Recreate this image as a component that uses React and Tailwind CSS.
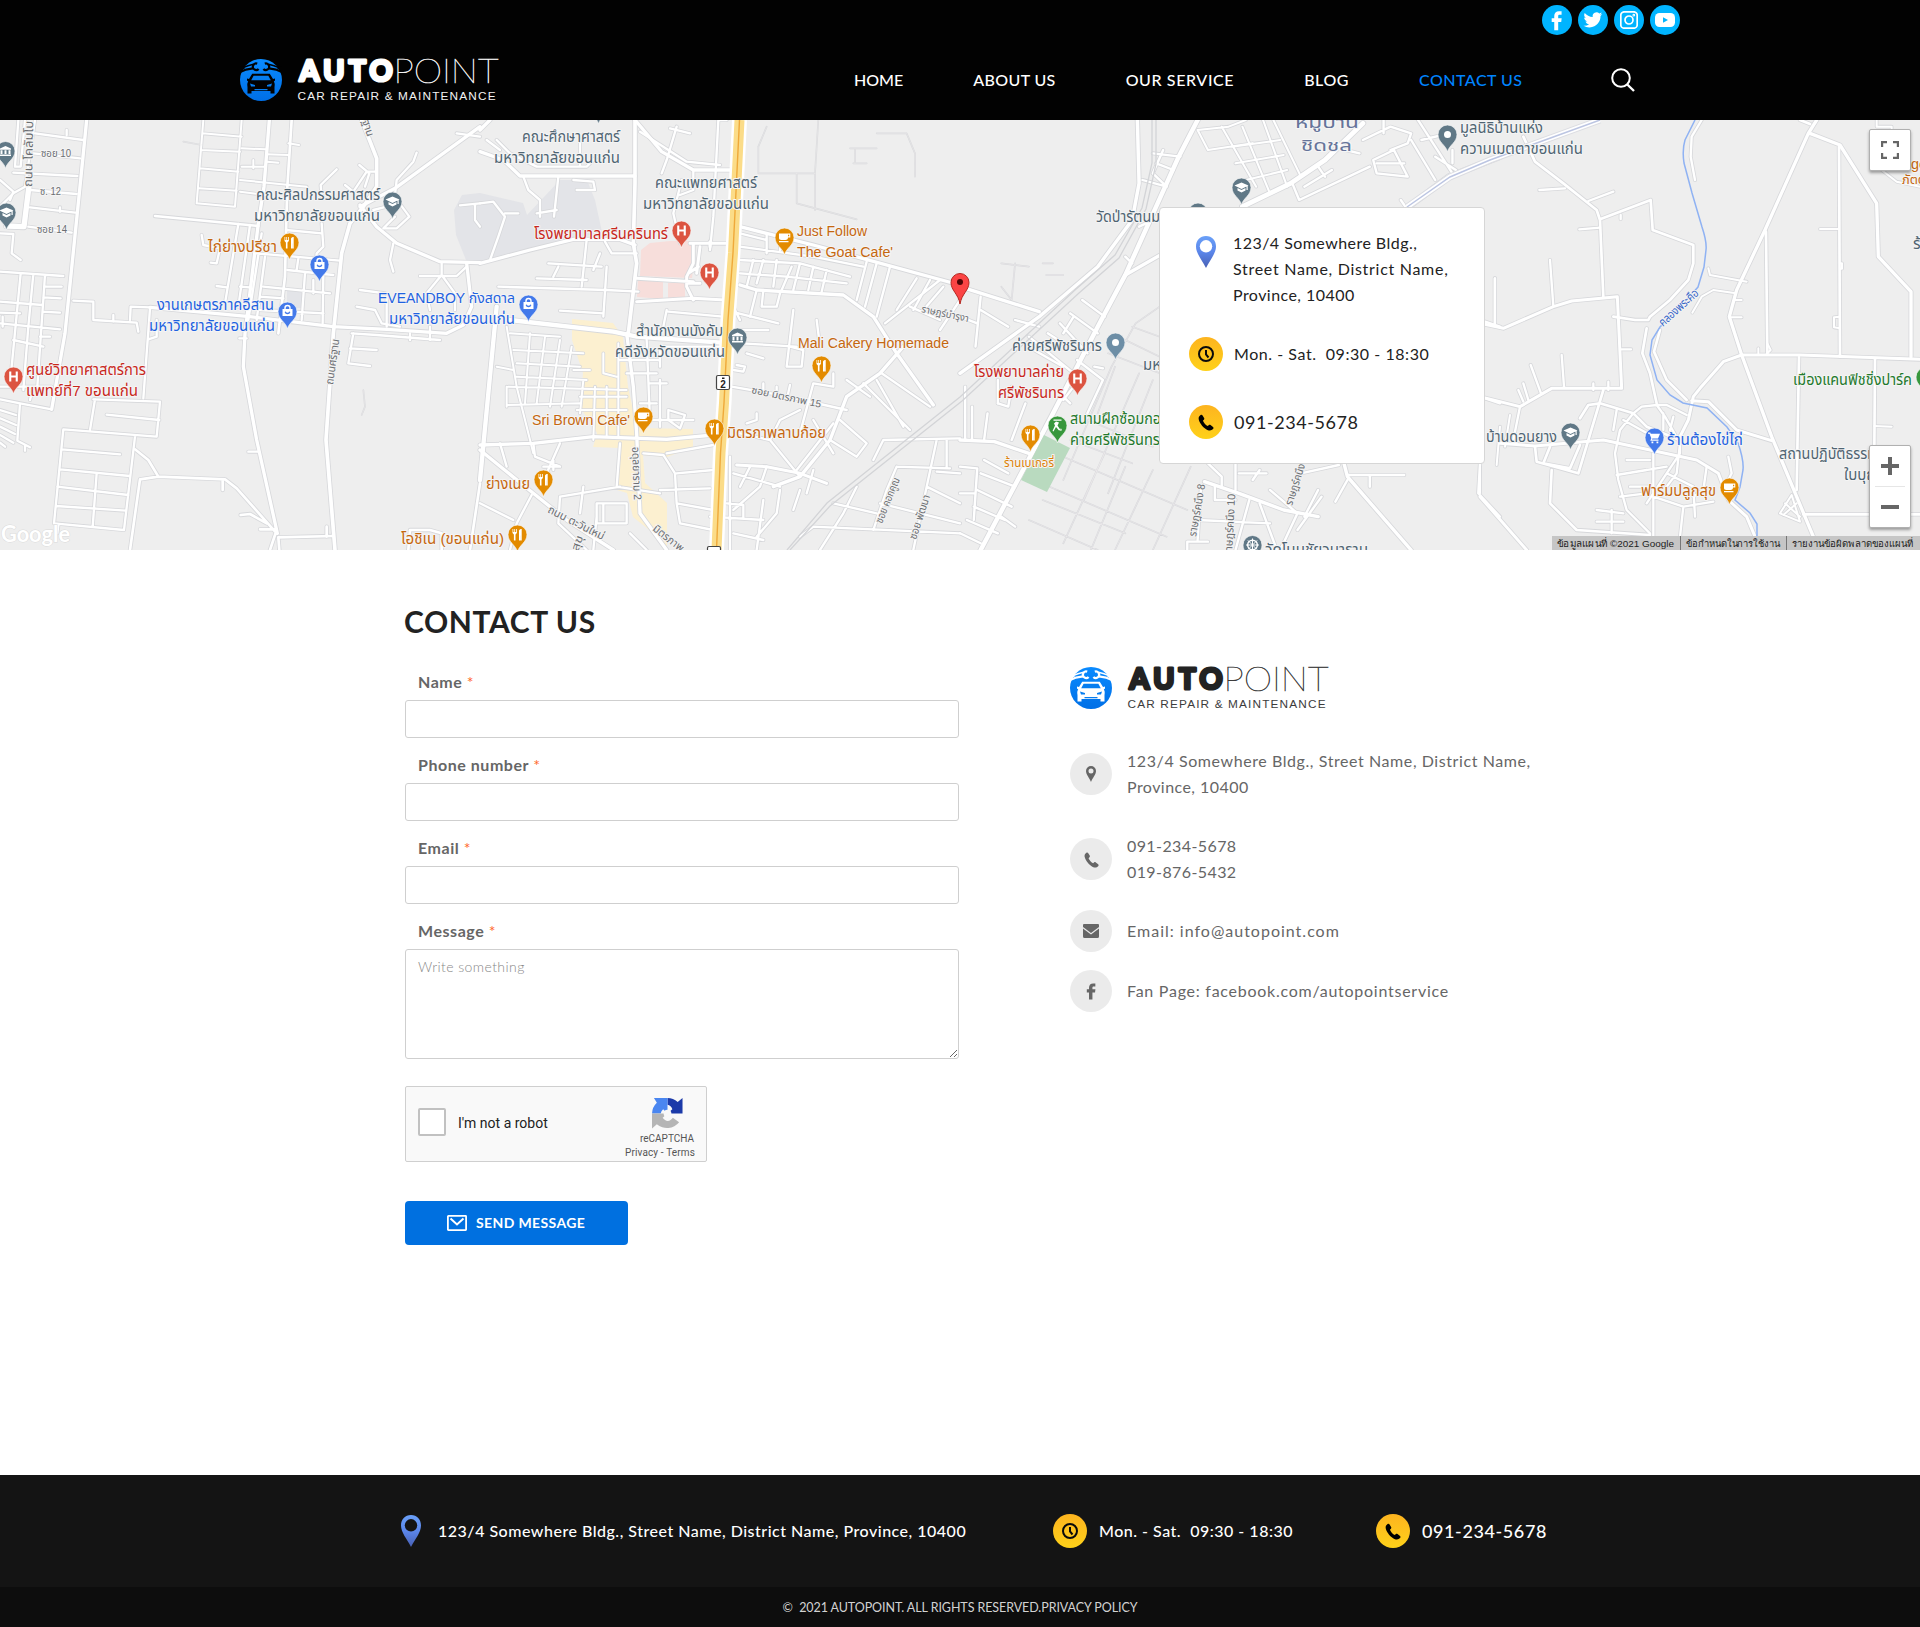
import React from "react";

/* ---------- Brand ---------- */

function CarBadge({ bg }) {
  const id = "badge" + bg.slice(1);
  return (
    <svg viewBox="0 0 42 42" className="block h-[42px] w-[42px] shrink-0">
      <defs>
        <linearGradient id={id} x1="0" y1="0" x2="0" y2="1">
          <stop offset="0" stopColor="#0a8bff" />
          <stop offset="1" stopColor="#006fe6" />
        </linearGradient>
      </defs>
      <circle cx="21" cy="21" r="21" fill={"url(#" + id + ")"} />
      <g fill="none" stroke={bg}>
        <path d="M-1 13.500C4 10.500 8 9.800 13 9.300M43 13.500C38 10.500 34 9.800 29 9.300" strokeWidth="2.200" />
        <path d="M0 9.800L8 6.800L13.500 5.200M42 9.800L34 6.800L28.500 5.200" strokeWidth="1.500" />
        <path d="M17.200 4.600A3.300 3.300 0 1 0 18.600 10M24.800 4.600A3.300 3.300 0 1 1 23.400 10" strokeWidth="2.200" />
      </g>
      <path d="M0 8L3 7.500L5 9.500L0 12ZM42 8L39 7.500L37 9.500L42 12Z" fill={bg} />
      <path d="M12.200 14.800H29.800L33 20L35 19.500V21.500L33.800 22.500C35 24 34.800 26 34.500 28V34.500H30.500V32H11.500V34.500H7.500V28C7.200 26 7 24 8.200 22.500L7 21.500V19.500L9 20Z" fill={bg} />
      <path d="M13.600 16.800H28.400L30.800 21.300H11.200Z" fill="#067df0" />
      <path d="M10 24.500L15 26V27.500H11ZM32 24.500L27 26V27.500H31ZM14.500 30H27.500V31.200H14.500Z" fill="#067df0" />
    </svg>
  );
}

function Logo({ bg, strong, light }) {
  return (
    <a className="flex w-[258px] gap-4">
      <CarBadge bg={bg} />
      <svg viewBox="0 0 202 44" className="block h-[44px] w-[202px] shrink-0 overflow-visible">
        <text x="1.500" y="22.400" fontFamily="Lato" fontWeight="700" fontSize="28.500" textLength="93" fill={strong} stroke={strong} strokeWidth="3.200" strokeLinejoin="round">AUTO</text>
        <text x="95.500" y="24" fontFamily="Lato" fontWeight="100" fontSize="33" textLength="105" lengthAdjust="spacingAndGlyphs" fill={light} stroke={light} strokeWidth="0.500">POINT</text>
        <text x="-0.500" y="41.300" fontFamily="Liberation Sans" fontSize="11.800" textLength="198" fill={light}>CAR REPAIR &amp; MAINTENANCE</text>
      </svg>
    </a>
  );
}

/* ---------- Small icons ---------- */

const GLYPH = {
  facebook: "M17 3.500h-2.800C11 3.500 9 5.500 9 8.700V11H6.200v4H9v9h4.300v-9h3.300l.5-4h-3.800V9c0-1.200.4-1.700 1.700-1.700h2z",
  twitter: "M23 6.500c-.8.300-1.600.6-2.400.7.900-.5 1.500-1.300 1.800-2.300-.8.500-1.700.8-2.600 1a4.200 4.200 0 0 0-7.100 3.800C9.200 9.500 6.100 7.800 4 5.300c-1.100 2-.6 4.300 1.300 5.600-.7 0-1.300-.2-1.900-.5 0 2 1.500 3.700 3.400 4.100-.6.200-1.300.2-1.900.1.500 1.600 2.100 2.900 3.900 2.900A8.500 8.500 0 0 1 2.700 19.200 12 12 0 0 0 9.200 21c8 0 12.200-6.800 11.900-12.300.7-.6 1.400-1.300 1.900-2.200z",
  phone: "M6.500 2.800c-.5-.9-1.500-1.100-2.300-.5C2.600 3.500 1.600 4.700 2 7.200c.6 3.600 4 8.500 8.200 11.400 3.600 2.500 6.500 2.400 8.500.2.700-.8.800-1.700 0-2.400l-2.900-2.300c-.8-.6-1.500-.5-2.200.1l-1.100 1c-2.100-1-4.600-3.900-5.600-6.300l1.100-1.100c.6-.6.700-1.300.3-2.100z",
};

function Social({ children }) {
  return (
    <a className="flex h-[30px] w-[30px] items-center justify-center rounded-full bg-[#00b4ff]">{children}</a>
  );
}

function Socials() {
  return (
    <div className="flex gap-[6px]">
      <Social>
        <svg viewBox="0 0 24 27" className="h-[25px] w-[22px]" fill="#fff"><path d={GLYPH.facebook} /></svg>
      </Social>
      <Social>
        <svg viewBox="0 0 26 26" className="h-[24px] w-[24px]" fill="#fff"><path d={GLYPH.twitter} /></svg>
      </Social>
      <Social>
        <svg viewBox="0 0 18 18" className="h-[18px] w-[18px]" fill="none" stroke="#fff" strokeWidth="1.700">
          <rect x="0.800" y="0.800" width="16.400" height="16.400" rx="3.500" />
          <circle cx="9" cy="9" r="4" />
          <circle cx="13.800" cy="4.200" r="0.500" />
        </svg>
      </Social>
      <Social>
        <svg viewBox="0 0 20 14" className="h-[14px] w-[20px]">
          <rect width="20" height="14" rx="4.500" fill="#fff" />
          <path d="M8 4.200L13 7L8 9.800Z" fill="#00b4ff" />
        </svg>
      </Social>
    </div>
  );
}

function PinIcon({ className, hole }) {
  return (
    <svg viewBox="0 0 20 32" className={className}>
      <defs>
        <linearGradient id="pinBlue" x1="0" y1="0" x2="0" y2="1">
          <stop offset="0" stopColor="#6aa0f8" />
          <stop offset="0.500" stopColor="#5b86ea" />
          <stop offset="1" stopColor="#4860b4" />
        </linearGradient>
      </defs>
      <path d="M10 0C4 0 0 4.500 0 10.500C0 17.500 6 24 10 32C14 24 20 17.500 20 10.500C20 4.500 16 0 10 0Z" fill="url(#pinBlue)" />
      <circle cx="10" cy="10.300" r="6.200" fill={hole} />
    </svg>
  );
}

function YellowDisc({ children }) {
  return (
    <span className="flex h-[34px] w-[34px] shrink-0 items-center justify-center rounded-full bg-gradient-to-b from-[#fdb41f] to-[#fed119]">{children}</span>
  );
}

function ClockGlyph() {
  return (
    <svg viewBox="0 0 16 16" className="h-[16px] w-[16px]" fill="none" stroke="#0b0b0b" strokeWidth="2">
      <circle cx="8" cy="8" r="7" />
      <path d="M8 4V8.500L10.500 11.500" />
    </svg>
  );
}

function PhoneGlyph({ className }) {
  return <svg viewBox="0 0 21 21" className={className} fill="currentColor"><path d={GLYPH.phone} /></svg>;
}

/* ---------- Map ---------- */

// Each tile lists roads as [path, width] in its own drawing units.
const TILES = [
  {
    t: "scale(.33333)",
    roads: [
      ["M260 0L240 200L195 640L155 868", 10],
      ["M105 40L250 60M100 100L240 115M40 158L232 168M90 210L230 222M90 262L226 278M85 320L215 338M200 30V45M180 262V275", 7],
      ["M88 190L72 320L20 318", 16],
      ["M105 0L75 200L40 220L0 260M0 180L40 215L30 240M55 0L45 140L62 140L75 0", 7],
      ["M0 455L190 468M62 460L35 740M100 462L85 620L70 810M135 465L112 800M135 500H185M130 532L182 535M128 575L180 578M0 545L128 555M0 578L60 580M0 610L180 628M40 660L130 680M8 590V620M0 340L40 342L35 400L62 420M120 650L150 650", 7],
      ["M0 838L60 850L155 868M60 850L52 962L90 982M75 975V992M0 870L48 885M0 895L48 915M0 920L45 942M0 945L40 968M0 968L15 980M0 800H155M90 840L100 800", 7],
      ["M610 0L590 250L705 260L725 0M608 40L725 50M602 90L720 95M600 145L715 155M598 205L710 212M725 85L798 88M725 140L795 140M760 120V145M720 180L920 200M720 215L795 225M800 103L865 105M800 125L835 128M865 70L897 75", 6],
      ["M550 65L605 75M1090 810L1095 860L1085 885", 3],
      ["M808 0L792 200L775 310L735 640L730 740L770 960L832 1240", 10],
      ["M875 0L862 200L858 340L855 470L835 640M465 288L775 318", 8],
      ["M715 312L675 550M750 315L715 560M785 340L745 600M605 345L610 375L660 385L650 430L632 428M770 400L1020 422M795 410L770 600M862 450L1000 465M858 330L965 340M965 310L970 380L950 400L948 420M895 415L890 450M915 460L905 600M790 500L990 520M780 530L850 535M780 570L970 580M970 460L968 610M650 498L680 502M720 500L750 502M940 520V480", 7],
      ["M220 542L280 545L280 600L410 608L415 635M390 600L392 560L450 562M340 585V605M450 565L430 835M470 600V650L445 658M718 655H740M745 995H775", 7],
      ["M450 562L750 590L1000 620L1160 628L1340 640L1390 615L1415 560L1400 430", 10],
      ["M1085 0L1130 115L1130 200L1090 260L1050 310L1025 400L1000 640L978 960L1005 1290", 11],
      ["M1440 20L1185 205L1080 260M1080 255L1130 320L1190 370L1320 425L1440 428", 10],
      ["M1250 98L1240 125L1190 180L1185 225M1370 40L1440 50M1010 148L962 195L965 230M1035 195L1060 215L1100 155L1125 155M1078 135L1108 160L1095 200M1120 270L1160 260L1195 245L1228 290L1190 325L1150 325L1185 290M1180 370L1170 420L1180 455", 7],
      ["M1260 468H1370L1400 440M1325 430V465L1280 520L1290 570M1325 465L1365 520V570M1080 510L1155 520M1070 560L1125 570L1145 610L1200 620M1160 530V620M1055 640L1130 645L1320 660M1060 640L1045 730L1110 738M1050 685L1130 690M1230 640V660M1290 620V660M1440 250L1380 256M1425 255V300L1440 320", 7],
      ["M280 838L480 845L470 950L190 928L162 1210L372 1230L405 950M285 838L270 930M320 884L478 900M185 988L360 1003M180 1048L390 1068M172 1100L385 1125M168 1158L378 1172M290 1060L278 1220M175 1215L172 1240", 7],
      ["M390 1290L420 1078L475 1070L445 1020L405 988M475 1070L675 1078L710 1105L830 1240M668 1080V1110M722 1185L750 1182L800 1210M780 1228H830M810 1290L830 1230M838 1290L835 1252L1000 1248M980 1220V1250", 8],
      ["M1440 1090L1410 1290M1225 1290L1230 1230H1290L1325 1240V1290", 8],
    ],
  },
  {
    t: "translate(480) scale(.33333)",
    roads: [
      ["M465 0V190L460 370L470 430L445 640", 11],
      ["M0 95L70 120L120 168H465M0 430L150 390L280 358L420 358L465 375M0 30L30 0", 10],
      ["M235 170L222 290M130 170L145 210L180 240V290M0 250L40 245L75 290L55 350L30 420M75 280H115M170 280L230 270", 7],
      ["M50 60L90 100L170 140L320 140L350 110M20 60L60 90M300 60V140M280 180L340 185L345 210H290", 7],
      ["M465 0L545 95L640 150H750", 10],
      ["M590 20L560 120L545 160M570 25L630 40M480 35L620 125L720 135M740 0L715 0L700 290L690 390M605 180L580 280L600 370M640 150V210L600 225", 7],
      ["M320 360L305 500M205 430L365 440M170 475L320 480M375 365L395 400H470M380 440L370 590M55 500L380 510L475 515M220 470L235 440M240 572L370 580M360 400L340 450", 7],
      ["M90 600L400 635L470 650L725 668M50 560L0 1080", 13],
      ["M470 475L640 485M470 545L640 535L735 540M630 370H740M690 365V380M640 370V430L620 470V500L640 540M655 440L625 460M620 490H660M660 380L650 460", 9],
      ["M80 620L110 800L130 880L160 1000M50 740L100 750M90 640L240 650M100 690L310 700M110 730L300 740M110 770L320 780M85 800L440 810M80 855L300 850M300 830H440M80 800V860M290 870H440M150 640L135 850M195 650L170 850M240 660L210 860M275 680L245 860M380 800V950M415 670V950M345 800L340 960M310 780L300 880M280 750H330M370 700V760L410 770", 6],
      ["M440 640L460 800L470 940L480 1180L560 1290M0 975L160 970L340 950L560 958L700 945", 10],
      ["M420 720H540M440 760H530M500 660L510 900M510 790H560M540 740V690M550 680H730M560 570L550 620M565 575L730 590M565 870L615 885L600 925L565 900ZM510 900H640M540 780V920M480 850H530", 7],
      ["M0 990L160 1120L260 1200L400 1290", 10],
      ["M155 1125L110 1210L90 1290M160 970L165 1010L240 1040M240 970L200 1060M60 970L80 1040M490 1000L550 1005L585 1060L590 1150L700 1170M560 1000L700 975M590 1060L700 1050M540 1110L690 1105M590 1150L600 1210L700 1230M350 1150H440V1210H350ZM370 1150V1210M350 1190L340 1290M240 1130L420 1100M420 970L410 1100L540 1120M310 1100L300 1180M240 1130L235 1210L320 1290M100 1200L0 1150M190 1040H240M220 1020V1050M450 1240L500 1290", 7],
      ["M780 320L1000 375L1440 495M780 495L830 510L1090 525L1180 590L1250 700L1360 855M1270 680L1200 760L1100 830L1050 960L960 1070L880 1100", 10],
      ["M780 380L1000 410L1150 440M860 340V400M900 350V390M780 420L960 430L1110 470M850 420L830 490M830 510L810 590M850 510L845 560H890L900 520M890 420L880 500M935 440L905 510M780 460L920 470L1100 490M820 420L800 500M960 430L940 510M1000 440L985 510M1040 450L1025 515M780 340L860 360", 7],
      ["M1160 425L1130 540M1190 430L1155 560M1230 440L1190 590M1215 610L1380 480M1310 475L1250 570M1350 480L1300 570M1290 560L1380 600M1440 540L1380 630M1390 500L1330 570", 7],
      ["M755 575L895 610M780 600L760 560M760 630L865 630M785 670L950 680M940 570L920 740H965L970 690L930 680M1010 600L1020 680M800 700L850 715M770 735L795 740L790 755L760 750", 7],
      ["M755 800L900 825L1100 870M850 790V810M930 795L920 840M890 800V820M830 880V900L800 910M1100 780L1170 830M1060 760V800L1000 790L960 940M1150 790L1290 930M1205 760L1350 860M1190 780L1270 920M780 940L870 960L960 1070M870 960L900 900L960 870M1000 900L1060 1000M1050 960L1130 1010L1160 970L1080 900M1060 910L950 1050", 7],
      ["M770 1035L860 1040L960 1060L1040 1090", 9],
      ["M860 1040L840 1100L760 1170M740 1150L790 1155V1195L745 1195M690 1190L850 1200M900 1110L890 1180L830 1250M960 1110L940 1170M1000 1050L980 1120M750 1010V1290M760 1060L900 1100M810 1040L780 1100M850 1140L830 1290M760 1240L850 1260", 7],
      ["M1180 1020L1210 960L1440 955M1250 1040L1410 1045M1370 960L1340 1100L1300 1290M1250 1040L1220 1110L1180 1230M1340 1100L1440 1150M1200 1150L1440 1210M1060 1150L1190 1180M960 1250L1000 1220L1440 1240M1130 1100L1090 1180L1020 1290M1370 1055L1440 1060M1400 960V1040", 7],
      ["M1190 40L1280 40L1305 100V170M860 20L835 80V160H1005L1015 0M950 160V250L1130 298M1005 160V270M1110 85H1190M1120 130H1160M1125 90V130", 3],
    ],
  },
  {
    t: "translate(960) scale(.34437 .33333)",
    roads: [
      ["M690 0L635 110L480 465L400 620L265 890L60 1290", 13],
      ["M515 0L520 190L500 300L400 440L230 590L0 760", 10],
      ["M0 500L230 575M480 465L590 400", 10],
      ["M60 530L45 680M0 590L50 610M60 570L140 620", 7],
      ["M560 100L640 110M570 130L620 150M590 90L560 160L600 200M530 180L600 200M480 410L500 430M520 320L540 310", 7],
      ["M690 30L780 20L830 0M690 30L720 90L850 70M760 20L860 200M820 20L900 220M880 0L950 200M790 80L930 60M800 130L940 105M830 180L950 150M910 0L990 170", 6],
      ["M820 260L960 190L1060 120L1170 10", 14],
      ["M965 190L985 240L1190 140M1000 200L1080 150M1040 140L1060 170M1170 60L1250 20L1310 40L1300 70L1250 90M1200 120L1260 90L1300 170L1210 160ZM1210 130H1290M1330 0L1430 160M1310 60L1380 180M1340 60L1420 40M1230 0V40M1280 240L1300 270M1380 110L1440 150M1430 90V130M1120 90L1160 100", 7],
      ["M1568 110L1420 170L1300 262", 15],
      ["M355 540L420 590M320 580L400 640M290 610L370 700M255 640L300 670M160 600L230 620M200 650L330 760M330 590L300 640M215 690L300 740M340 720L415 780L370 880M300 840L330 800M300 830L320 850M390 740L415 745M110 850L140 860L150 800", 7],
      ["M120 430L200 440M160 430L150 540L120 500M240 430H270M250 465H300M580 560L510 610L440 740L300 1080M430 700L580 760M500 620L580 650M480 660L580 710M450 740L400 880M520 760L360 1140M560 780L430 1120M300 1010L660 1170M320 960L500 1030M260 1100L600 1250M670 1040L560 1290M560 1050L450 1290M480 1040L380 1290M420 1000L300 1270M240 1140L480 1240M200 1200L400 1290M370 900L560 980", 3],
      ["M0 960L100 965L200 1000", 10],
      ["M35 860V960M80 880L70 960M190 850L150 960M110 780V850M15 800V960M0 1040L50 1045L40 1200M70 1020L140 1060M60 1060L160 1100M50 1110L150 1160M40 1160L130 1200M20 1200L110 1240M0 1240L60 1270M120 1190L160 1220M0 1120H45", 7],
      ["M710 1085L810 1120L940 1170L1040 1190M1115 1030L1125 1070L1310 1290", 10],
      ["M720 1030L760 1070V1100M800 1030V1110M810 1060H890M850 1080L870 1050M690 1200L900 1210M700 1100L690 1260M840 1140L800 1290M870 1150L920 1290M900 1110L980 1180L930 1290M1050 1130L980 1230M1000 1190L1040 1110M660 1290V1265H720M740 1100V1140H800M1125 1065H1290M1190 1070V1100M1125 1080L1090 1145M990 1060L1100 1035", 7],
      ["M1525 605L1568 620M1525 835L1568 850M1510 1030L1505 1120L1568 1190M1553 475V610", 7],
    ],
  },
  {
    t: "translate(1480) scale(.33333)",
    roads: [
      ["M665 0L635 50L632 110L645 180M178 210L255 205M325 243L400 215M422 285V297M298 328L360 323", 7],
      ["M130 50L165 125L250 190L350 270L360 300L370 530M360 298L512 240L518 330L640 375V430L625 480L570 540L510 590L505 600H465L400 590", 8],
      ["M0 610L70 625L220 560L275 543L412 530L425 805H215L120 860L0 830", 9],
      ["M45 475V610M210 420L220 558M425 688H453M245 705L252 800M152 735L183 820M130 790L145 840M115 810L130 845M120 860L100 960M340 790V810M385 785V810", 7],
      ["M500 625L487 700L510 760L530 850M540 630L522 695L560 780L620 840", 8],
      ["M1010 0L985 40L855 330L770 510L748 590L785 705L875 950L1000 1250M990 40L1080 75L1190 250L1195 410L1293 515V710", 10],
      ["M785 705H960L1320 718M785 705L730 725L660 805L640 830L625 900L600 950M635 842L685 845L770 930L875 962", 9],
      ["M960 0L990 12M1077 80L1080 710M858 335L862 700M957 712L950 1110M1185 718L1183 990M970 1183H1320", 8],
      ["M1020 327H1075M685 445L690 465L800 485M768 520L700 510L665 530L637 578M765 540H785M750 592H785M1080 430H1086V446H1080M1080 590L1062 592V622L1080 625M835 685V700M862 670L872 690L862 700M1183 918L1235 920M935 1125L900 1180L960 1205ZM915 1150L960 1190M910 1185L950 1150M1190 0V20H1235V30M1205 150L1250 185L1320 200", 6],
      ["M60 970L165 978L370 960L440 975L650 1020L715 1060L745 1140L800 1190L825 1250M0 1130L140 1290", 9],
      ["M370 810L295 1060L170 1025L165 980M210 980L190 1030L270 1045L300 975M215 1050L210 1150L290 1230L510 1245M300 895L325 855L360 850L460 880L500 920L600 960", 8],
      ["M460 880L420 930L405 1000L415 1080L440 1170L510 1240M530 855L485 860L460 880M530 855L555 890L600 970L590 1060L560 1100M530 855H560L620 885M410 870L400 930M430 900L520 950M440 1060L560 1040M410 1065L500 1050M520 1000V1250M520 1130L610 1160L700 1145M600 950L600 1000L560 1060L500 1150M560 1060L640 1100L645 1190M610 1160L600 1250M420 1130L500 1120M350 1170L430 1180M350 1205H430M395 1170V1240M680 1040L670 1110L640 1130M745 1010L755 1060L740 1090M440 1020H510M550 880V930M580 890L570 930M450 1100H520", 7],
      ["M90 885L75 980M60 920L50 1035M0 1020V1120", 6],
    ],
  },
];

const PIN_COLORS = { gray: "#607886", slate: "#6d8ea6", orange: "#e38b00", blue: "#4379ea", red: "#dc5441", green: "#38973d" };

const SYMBOLS = {
  school: <path d="M0 -5L7 -2L0 1.500L-7 -2ZM-4 0.500L0 2.500L4 0.500V3L0 5L-4 3ZM5 -1.500H6.200V2.500H5Z" fill="#fff" />,
  museum: <path d="M0 -5L5.500 -2.500V-1.300H-5.500V-2.500ZM-5 -.8H-3V3H-5ZM-1 -.8H1V3H-1ZM3 -.8H5V3H3ZM-5.500 3.400H5.500V5H-5.500Z" fill="#fff" />,
  fork: <path d="M-5 -5.500H-4.200V-2.500H-3.200V-5.500H-2.400V-2.500H-1.400V-5.500H-.6V-1.500L-2 0V6H-3.600V0L-5 -1.500ZM1.500 6V-3.500C1.500 -5 3 -5.500 4.200 -5.500V6H2.600V1H2.500V6Z" fill="#fff" />,
  cup: <path d="M-5.500 -4H5.800V0H3.500C3.500 1.800 2.200 2.500 1 2.500H-3C-4.800 2.500 -5.500 1.500 -5.500 .5ZM3.500 -2.800V-1.200H4.700V-2.800ZM-5.500 3.500H4V4.800H-5.500Z" fill="#fff" fillRule="evenodd" />,
  bag: <g><path d="M-5 -2.500H5V4.500H-5Z" fill="#fff" /><path d="M-2.500 -2.500V-3.500A2.500 2.500 0 0 1 2.500 -3.500V-2.500" stroke="#fff" strokeWidth="1.400" fill="none" /><path d="M-2.300 .3A2.400 2.400 0 0 0 2.300 .3" stroke="#4379ea" strokeWidth="1.300" fill="none" /></g>,
  cart: <path d="M-6.500 -5H-4.200L-3.800 -3.800H5.500L3.500 1H-2.200L-2.600 2H4V3.200H-4.200L-3.200 .8L-5 -3.800H-6.500ZM-3 4H-1.200V5.800H-3ZM2 4H3.800V5.800H2Z" fill="#fff" />,
  hospital: <path d="M-4.300 -5H-2.200V-1.100H2.200V-5H4.300V5H2.200V.9H-2.200V5H-4.300Z" fill="#fff" />,
  golf: <path d="M-4 -6H4V-4.800H-4ZM-1.500 -4L1.500 -3L0 0L3 4.500L1.500 5L-1.500 1.500L-4 6L-5 5.500L-2.500 0L-3.500 -2ZM3 3A1.200 1.200 0 1 1 3 5.400Z" fill="#fff" />,
  dot: <circle r="3.500" fill="#fff" />,
  wheel: <g fill="none" stroke="#fff" strokeWidth="1"><circle r="4.800" strokeWidth="1.500" /><path d="M0 -6.500V6.500M-6.500 0H6.500M-4.600 -4.600L4.600 4.600M4.600 -4.600L-4.600 4.600" /></g>,
};

const PINS = [
  [5.5, 31, "gray", "museum"], [6.5, 92.5, "gray", "school"], [392.5, 81.5, "gray", "school"], [289.5, 122.5, "orange", "fork"],
  [319.5, 144.5, "blue", "bag"], [287.5, 191.5, "blue", "bag"], [13.5, 256.5, "red", "hospital"],
  [598.5, -13.5, "gray", "school"], [681.5, 110.5, "red", "hospital"], [709.5, 152.5, "red", "hospital"], [784.5, 117.5, "orange", "cup"],
  [528.5, 184.5, "blue", "bag"], [737.5, 217.5, "gray", "museum"], [821.5, 245.5, "orange", "fork"], [643.5, 296.5, "orange", "cup"],
  [714.5, 308.5, "orange", "fork"], [543.5, 359.5, "orange", "fork"], [517.5, 414.5, "orange", "fork"],
  [1241.5, 67.5, "gray", "school"], [1198, 92.5, "gray", "dot"], [1447.5, 14.5, "gray", "dot"], [1115.5, 222.5, "slate", "dot"],
  [1077.5, 258.5, "red", "hospital"], [1057.5, 305.5, "green", "golf"], [1030.5, 314.5, "orange", "fork"], [1252.5, 425, "gray", "wheel"],
  [1570.5, 312.5, "gray", "school"], [1654.5, 317.5, "blue", "cart"], [1729.5, 367.5, "orange", "cup"], [1925.5, 257, "green", "golf"],
];

const G = "#4f6472", O = "#c5670f", B = "#1f62e0", R = "#c8281c", N = "#23792c", S = "#6b6e72";

// [text, x, baseline, width, colour, size]
const LABELS = [
  ["คณะศิลปกรรมศาสตร์", 256, 80, 124, G, 15], ["มหาวิทยาลัยขอนแก่น", 254, 101, 126, G, 15],
  ["ไก่ย่างปรีชา", 208, 132, 69, O, 15], ["งานเกษตรภาคอีสาน", 157, 190, 117, B, 15], ["มหาวิทยาลัยขอนแก่น", 149, 211, 126, B, 15],
  ["ศูนย์วิทยาศาสตร์การ", 26, 255, 120, R, 15], ["แพทย์ที่7 ขอนแก่น", 26, 276, 112, R, 15],
  ["EVEANDBOY กังสดาล", 378, 183, 137, B, 14.5], ["มหาวิทยาลัยขอนแก่น", 389, 204, 126, B, 15],
  ["โอชิเน (ขอนแก่น)", 401, 424, 103, O, 15],
  ["คณะศึกษาศาสตร์", 522, 22, 98, G, 15], ["มหาวิทยาลัยขอนแก่น", 494, 43, 126, G, 15],
  ["คณะแพทยศาสตร์", 655, 68, 102, G, 15], ["มหาวิทยาลัยขอนแก่น", 643, 89, 126, G, 15],
  ["โรงพยาบาลศรีนครินทร์", 534, 119, 134, R, 15], ["Just Follow", 797, 116, 70, O, 14], ["The Goat Cafe'", 797, 137, 96, O, 14],
  ["สำนักงานบังคับ", 636, 216, 87, G, 15], ["คดีจังหวัดขอนแก่น", 615, 237, 110, G, 15],
  ["Mali Cakery Homemade", 798, 228, 151, O, 14], ["Sri Brown Cafe'", 532, 305, 98, O, 14],
  ["มิตรภาพลาบก้อย", 727, 318, 99, O, 15], ["ย่างเนย", 486, 369, 44, O, 15],
  ["มูลนิธิบ้านแห่ง", 1460, 13, 83, G, 15], ["ความเมตตาขอนแก่น", 1460, 34, 123, G, 15], ["วัดป่ารัตนม", 1096, 102, 64, G, 15],
  ["ค่ายศรีพัชรินทร", 1012, 231, 90, G, 15], ["โรงพยาบาลค่าย", 974, 257, 90, R, 15], ["ศรีพัชรินทร", 998, 278, 66, R, 15],
  ["สนามฝึกซ้อมกอ", 1070, 304, 91, N, 15], ["ค่ายศรีพัชรินทร", 1070, 325, 90, N, 15], ["ร้านเบเกอรี่", 1004, 347, 50, "#dd8209", 12],
  ["มห", 1143, 250, 18, G, 15], ["หมู่บ้าน", 1295, 8, 64, "#66749a", 16], ["ชิดชล", 1301, 31, 51, "#66749a", 15],
  ["วัดโนนชัยวนาราม", 1265, 435, 103, G, 15],
  ["บ้านดอนยาง", 1486, 322, 71, G, 15], ["ร้านต้องไข่ไก่", 1667, 325, 76, B, 15], ["เมืองแคนฟิชชิ่งปาร์ค", 1793, 265, 119, N, 15],
  ["สถานปฏิบัติธรรม", 1779, 339, 97, G, 15], ["ใบบุญ", 1844, 360, 36, G, 15], ["ฟาร์มปลูกสุข", 1641, 376, 75, O, 15],
  ["go", 1911, 49, 16, O, 14], ["ภัตต", 1902, 64, 24, O, 12], ["ร้า", 1913, 129, 14, G, 15],
  ["ซอย 10", 41, 37, 30, S, 10], ["ซ. 12", 40, 75, 21, S, 10], ["ซอย 14", 37, 113, 30, S, 10],
];

// [text, x, y, angle, width, size, colour]
const STREETS = [
  ["ถนน โคลัมโบ", 32, 67, -89, 66, 12, S], ["ถนนศรีฐาน", 333, 265, -82, 46, 11, S], ["ฐาน", 362, 1, 72, 17, 11, S],
  ["ซอย มิตรภาพ 15", 751, 273, 12, 71, 10, S], ["ราษฎร์บำรุงา", 921, 192, 12, 48, 10, S], ["อดุลยาราม 2", 632, 327, 88, 53, 11, S],
  ["ถนน ตะวันใหม่", 547, 392, 27, 62, 11, S], ["มิตรภาพ", 652, 410, 38, 36, 11, S], ["ซอย คอกคูณ", 882, 404, -68, 48, 11, S],
  ["ซอย พัฒนา", 916, 420, -72, 46, 11, S], ["สุขุ", 578, 432, -70, 16, 11, S], ["ราษฎร์คนึง 8", 1196, 417, -80, 53, 11, S], ["ราษฎร์คนึง 10", 1232, 436, -87, 62, 11, S],
  ["ราษฎร์คนึง", 1292, 386, -72, 43, 11, S], ["คลองพระคือ", 1663, 207, -42, 49, 12, "#3565c8"],
];

const HIGHWAY = "M739.500 0L733 133L728 200L724 283L720.500 333L716.500 430";
const CANAL_ROAD = "M1407 87L1450 57L1490 40L1600 0";

function MapCanvas() {
  return (
    <svg viewBox="0 0 1920 430" className="block h-[430px] w-[1920px]" fontFamily="'Liberation Sans', 'Noto Sans Thai', 'Noto Sans', sans-serif">
      <rect width="1920" height="430" fill="#eeeeee" />
      <g fill="#e3e4e8">
        <path d="M480 73L462 75L454 90L456 115L466 140L480 143L533 130L602 112L595 80L587 60H560L527 95L523 83Z" />
        <path d="M287 170h15v18h-15z" />
      </g>
      <path d="M641 130L650 123L670 121L696 121L692 158L640 156ZM638 160L663 162V179L637 177ZM668 163H685V179H668Z" fill="#f7dedb" />
      <path d="M572 199L613 203L623 217L628 267L637 308L693 309V327L667 337L643 335L645 363L667 383V427L653 413L633 397L627 373L617 370L620 328L593 327L597 313L580 287L583 253L572 220Z" fill="#fcf0d0" />
      {TILES.map((tile, i) => (
        <g key={i} transform={tile.t} fill="none" stroke="#d7d8db" strokeLinejoin="round" strokeLinecap="round">
          {tile.roads.map(([d, w], k) => <path key={k} d={d} strokeWidth={w + (w > 4 ? 5 : 2)} />)}
        </g>
      ))}
      {TILES.map((tile, i) => (
        <g key={i} transform={tile.t} fill="none" stroke="#fff" strokeLinejoin="round" strokeLinecap="round">
          {tile.roads.map(([d, w], k) => <path key={k} d={d} strokeWidth={w > 4 ? w : 1.5} stroke={w > 4 ? "#fff" : "#f1eeef"} />)}
        </g>
      ))}
      <g fill="none" stroke="#d3d4d7" strokeWidth="1.300">
        <path d="M787 430L827 383L960 277L1075 170L1115 135L1142 88L1152 43V0" />
        <path d="M790 430L830 386L962 281L1079 173L1119 138L1146 89L1156 44V0" />
      </g>
      <path d="M1044 315L1070 328L1047 372L1021 360Z" fill="#b9dabf" />
      <path d={CANAL_ROAD} fill="none" stroke="#dcdde2" strokeWidth="7" />
      <path d={CANAL_ROAD} fill="none" stroke="#fff" strokeWidth="5" />
      <path d={CANAL_ROAD} fill="none" stroke="#bcc5e2" strokeWidth="1.500" />
      <path d="M1695 0L1685 20Q1682 30 1684 43L1692 73L1702 107Q1707 122 1706 130L1704 147L1698 167L1680 187L1660 207L1652 220L1650 235L1657 260L1670 275L1683 283L1707 288L1727 307L1738 323Q1744 340 1743 350L1740 367L1735 380L1750 393L1757 404V430" fill="none" stroke="#8fb2f3" strokeWidth="1.500" />
      <g fill="none" strokeLinejoin="round">
        <path d={HIGHWAY} stroke="#fff" strokeWidth="15" />
        <path d={HIGHWAY} stroke="#fbdc88" strokeWidth="10" />
        <path d={HIGHWAY} stroke="#efa93a" strokeWidth="1.400" />
      </g>
      <g fill="#fff" stroke="#444" strokeWidth="1.200">
        <rect x="716.500" y="255.500" width="13" height="14" rx="1.500" />
        <rect x="707.500" y="426.500" width="13" height="14" rx="1.500" />
      </g>
      <text x="720.300" y="267.800" fontSize="10" fontWeight="700" fill="#222">2</text>
      <path d="M722 257.500H724.500V259H722Z" fill="#222" />
      {STREETS.map(([s, x, y, a, w, size, c]) => (
        <text key={s + x} transform={`translate(${x} ${y}) rotate(${a})`} textLength={w} lengthAdjust="spacingAndGlyphs" fontSize={size} fill={c} stroke="#f3f3f3" strokeWidth="2" paintOrder="stroke">{s}</text>
      ))}
      {PINS.map(([x, y, c, s]) => (
        <g key={x + "-" + y} transform={`translate(${x} ${y})`}>
          <path d="M0 17.500C-1.500 10.500 -9.500 8 -9.500 0A9.500 9.500 0 1 1 9.500 0C9.500 8 1.500 10.500 0 17.500Z" fill={PIN_COLORS[c]} stroke="#f6f6f6" strokeWidth="0.700" />
          {SYMBOLS[s]}
        </g>
      ))}
      {LABELS.map(([s, x, y, w, c, size]) => (
        <text key={s + x} x={x} y={y} textLength={w} lengthAdjust="spacingAndGlyphs" fontSize={size} fill={c} stroke="#f5f5f5" strokeWidth="2" strokeLinejoin="round" paintOrder="stroke">{s}</text>
      ))}
      <path d="M960 184C958.500 174 951 170.500 951 162.500A9 9 0 0 1 969 162.500C969 170.500 961.500 174 960 184Z" fill="#fb4444" stroke="#b3261e" strokeWidth="1" />
      <circle cx="960" cy="162" r="3" fill="#4c0505" />
      <text x="1" y="422" fontSize="22" fontWeight="700" fill="#fff" stroke="#dadada" strokeWidth="1" paintOrder="stroke" textLength="69" lengthAdjust="spacingAndGlyphs" fontFamily="Lato">Google</text>
    </svg>
  );
}

const ATTRIBUTION = [["ข้อมูลแผนที่ ©2021 Google", 129, 117], ["ข้อกำหนดในการใช้งาน", 106, 94], ["รายงานข้อผิดพลาดของแผนที่", 133, 121]];

function MapControls() {
  return (
    <>
      <button className="absolute left-[1869px] top-[9px] flex h-[42px] w-[42px] items-center justify-center rounded-[2px] border border-[#b0b0b0] bg-white shadow-[0_2px_3px_rgba(0,0,0,0.35)]">
        <svg viewBox="0 0 18 18" className="h-[18px] w-[18px]" fill="none" stroke="#666" strokeWidth="2.200">
          <path d="M1.100 6V1.100H6M12 1.100H16.900V6M16.900 12V16.900H12M6 16.900H1.100V12" />
        </svg>
      </button>
      <div className="absolute left-[1869px] top-[325px] flex h-[83px] w-[42px] flex-col items-center rounded-[2px] border border-[#b0b0b0] bg-white shadow-[0_2px_3px_rgba(0,0,0,0.35)]">
        <svg viewBox="0 0 18 18" className="mt-[11px] h-[18px] w-[18px]" stroke="#666" strokeWidth="4"><path d="M0 9H18M9 0V18" /></svg>
        <span className="mt-[11px] h-px w-[30px] bg-[#e6e6e6]" />
        <svg viewBox="0 0 18 4" className="mt-[18px] h-[4px] w-[18px]" fill="#666"><path d="M0 0H18V4H0Z" /></svg>
      </div>
      <div className="absolute bottom-0 right-0 flex h-[14px] w-[368px] bg-[#c6c6c6] font-['Liberation_Sans',sans-serif]">
        {ATTRIBUTION.map(([s, w, t]) => (
          <svg key={s} style={{ width: w }} className="block h-[14px] border-r border-[#777] last:border-0">
            <text x="5" y="10.500" fontSize="9.500" textLength={t} lengthAdjust="spacingAndGlyphs" fill="#222">{s}</text>
          </svg>
        ))}
      </div>
    </>
  );
}

function MapCard() {
  return (
    <div className="absolute left-[1159px] top-[87px] h-[257px] w-[326px] rounded-[4px] border border-[#d6d6d6] bg-white pl-[29px] text-[16px] leading-[26px] text-[#222]">
      <div className="mt-[22px] flex">
        <PinIcon className="ml-[7px] mt-[6px] block h-[32px] w-[20px] shrink-0" hole="#fff" />
        <p className="ml-[17px]">
          <span className="tracking-[0.45px]">123/4 Somewhere Bldg.,</span><br />
          <span className="tracking-[0.71px]">Street Name, District Name,</span><br />
          <span className="tracking-[0.45px]">Province, 10400</span>
        </p>
      </div>
      <div className="mt-[29px] flex items-center gap-[11px]">
        <YellowDisc><ClockGlyph /></YellowDisc>
        <span className="whitespace-pre tracking-[0.55px]">Mon. - Sat.  09:30 - 18:30</span>
      </div>
      <div className="mt-[34px] flex items-center gap-[11px]">
        <YellowDisc><PhoneGlyph className="h-[18px] w-[18px] text-black" /></YellowDisc>
        <span className="text-[18px] tracking-[0.56px]">091-234-5678</span>
      </div>
    </div>
  );
}

/* ---------- Form ---------- */

function Label({ children }) {
  return (
    <label className="block h-6 pl-[13px] text-[16px] font-bold leading-6 tracking-[0.54px] text-[#666]">
      {children} <span className="font-normal text-[#ff6a2b]">*</span>
    </label>
  );
}

function Field({ label }) {
  return (
    <div className="mb-[15px]">
      <Label>{label}</Label>
      <input className="mt-[6px] block h-[38px] w-[554px] rounded-[3px] border border-[#cfcfcf] bg-white" />
    </div>
  );
}

function Captcha() {
  return (
    <div className="mt-[27px] flex h-[76px] w-[302px] rounded-[2px] border border-[#cfcfcf] bg-[#f9f9f9] font-[Roboto]">
      <span className="ml-[12px] mt-[21px] h-[28px] w-[28px] rounded-[2px] border-2 border-[#c1c1c1] bg-white" />
      <span className="ml-[12px] mt-[26px] text-[14px] leading-5 text-[#222]">I'm not a robot</span>
      <div className="ml-auto mr-[11px] mt-[11px] flex w-[71px] flex-col items-end text-[10px] leading-[14px] text-[#555]">
        <svg viewBox="0 0 32 32" className="mr-[12px] block h-[31px] w-[31px]">
          <path d="M16 0A16 16 0 0 1 26.500 4L31.500 0V16H16L21 11.500A7 7 0 0 0 16 7Z" fill="#1c3aa9" />
          <path d="M16 0V16L11.500 11.500A7 7 0 0 0 9 16H0A16 16 0 0 1 5 5L2 0Z" fill="#4a86f0" />
          <path d="M0 16H16L11 20.500C14 25 19 24.500 21.500 20.500L28 25A16 16 0 0 1 5 27L0 31.500Z" fill="#b5b5b5" />
          <circle cx="16" cy="16" r="4" fill="#f9f9f9" />
        </svg>
        <span className="mr-px mt-[3px]">reCAPTCHA</span>
        <span className="tracking-[0.14px]">Privacy - Terms</span>
      </div>
    </div>
  );
}

/* ---------- Contact details ---------- */

function Detail({ className, icon, children }) {
  return (
    <div className={"flex items-center gap-[15px] " + className}>
      <span className="flex h-[42px] w-[42px] shrink-0 items-center justify-center rounded-full bg-[#ebebeb] text-[#666]">{icon}</span>
      <p className="whitespace-nowrap text-[16px] leading-[26px] text-[#666]">{children}</p>
    </div>
  );
}

const NAV = [
  ["HOME", "tracking-normal"],
  ["ABOUT US", "tracking-[0.36px]"],
  ["OUR SERVICE", "tracking-[0.61px]"],
  ["BLOG", "tracking-[0.56px]"],
  ["CONTACT US", "tracking-[0.47px] text-[#0084ff]"],
];

export default function App() {
  return (
    <div className="w-[1920px] bg-white font-[Lato,'Noto_Sans_Thai',sans-serif]">
      <header className="h-[120px] bg-[#020202]">
        <div className="mx-auto w-[1440px] pt-[5px]">
          <div className="flex justify-end"><Socials /></div>
          <div className="flex pt-6">
            <Logo bg="#020202" strong="#ffffff" light="#f2f2f2" />
            <nav className="ml-[356px] mt-[9px] flex gap-[70px] whitespace-nowrap text-[16px] font-medium leading-6 text-white">
              {NAV.map(([s, c]) => <a key={s} className={c}>{s}</a>)}
            </nav>
            <svg viewBox="0 0 24 24" className="ml-auto mr-[45px] mt-[9px] block h-[24px] w-[24px]" fill="none" stroke="#fff" strokeWidth="2"><circle cx="10" cy="10" r="8.800" /><path d="M16.300 16.500L23 23" strokeWidth="2.400" /></svg>
          </div>
        </div>
      </header>

      <section className="relative h-[430px] overflow-hidden">
        <MapCanvas />
        <MapCard />
        <MapControls />
      </section>

      <main className="ml-[405px] flex h-[925px] gap-[111px]">
        <form className="w-[554px] pt-[53px]">
          <h2 className="mb-[31px] ml-[-1px] h-9 text-[30px] font-bold leading-9 tracking-[0.6px] text-[#222]">CONTACT US</h2>
          <Field label="Name" />
          <Field label="Phone number" />
          <Field label="Email" />
          <Label>Message</Label>
          <textarea placeholder="Write something" className="mt-[6px] block h-[110px] w-[554px] rounded-[3px] border border-[#cfcfcf] px-[12px] py-[7px] text-[14px] font-light leading-5 tracking-[0.42px] placeholder:text-[#888]" />
          <Captcha />
          <button className="mt-[39px] flex h-[44px] w-[223px] items-center rounded-[4px] bg-[#0070e0] pl-[42px] text-[14px] font-bold text-white">
            <svg viewBox="0 0 20 16" className="mr-[9px] h-[16px] w-[20px]" fill="none" stroke="#fff" strokeWidth="1.800"><rect x="0.900" y="0.900" width="18.200" height="14.200" rx="0.500" /><path d="M3.500 3.500L10 9.500L16.500 3.500" strokeWidth="2" /></svg>
            <span className="mb-px tracking-[0.38px]">SEND MESSAGE</span>
          </button>
        </form>
        <aside className="w-[480px] pt-[117px]">
          <Logo bg="#ffffff" strong="#222222" light="#3c3c3c" />
          <Detail className="mt-[37px]" icon={<svg viewBox="0 0 10 16" className="h-[16px] w-[10px]" fill="currentColor"><path fillRule="evenodd" d="M5 0A5 5 0 0 0 0 5C0 8.500 3.500 12 5 16C6.500 12 10 8.500 10 5A5 5 0 0 0 5 0ZM5 2.500A2.500 2.500 0 1 1 5 7.500A2.500 2.500 0 0 1 5 2.500Z" /></svg>}>
            <span className="tracking-[0.58px]">123/4 Somewhere Bldg., Street Name, District Name,</span><br /><span className="tracking-[0.45px]">Province, 10400</span>
          </Detail>
          <Detail className="mt-[33px]" icon={<PhoneGlyph className="h-[17px] w-[17px]" />}>
            <span className="tracking-[0.4px]">091-234-5678<br />019-876-5432</span>
          </Detail>
          <Detail className="mt-[25px]" icon={<svg viewBox="0 0 16 14" className="h-[14px] w-[16px]" fill="currentColor"><path d="M1 0H15Q16 0 16 1V3L8 9L0 3V1Q0 0 1 0ZM0 4.500L8 10.500L16 4.500V12.500Q16 14 14.500 14H1.500Q0 14 0 12.500Z" /></svg>}>
            <span className="tracking-[1px]">Email: info@autopoint.com</span>
          </Detail>
          <Detail className="mt-[18px]" icon={<svg viewBox="5.500 3 12 21.500" className="h-[17px] w-[10px]" fill="currentColor"><path d={GLYPH.facebook} /></svg>}>
            <span className="tracking-[0.74px]">Fan Page: facebook.com/autopointservice</span>
          </Detail>
        </aside>
      </main>

      <footer className="bg-[#0d0d0d] text-white">
        <div className="flex h-[112px] items-start whitespace-pre bg-[#141414] pl-[401px] pt-[39px] text-[16px] font-medium">
          <div className="flex h-[34px] w-[652px] items-center gap-[17px]">
            <PinIcon className="block h-[32px] w-[20px]" hole="#141414" />
            <span className="tracking-[0.5px]">123/4 Somewhere Bldg., Street Name, District Name, Province, 10400</span>
          </div>
          <div className="flex h-[34px] w-[323px] items-center gap-[12px]">
            <YellowDisc><ClockGlyph /></YellowDisc>
            <span className="tracking-[0.5px]">Mon. - Sat.  09:30 - 18:30</span>
          </div>
          <div className="flex h-[34px] items-center gap-[12px]">
            <YellowDisc><PhoneGlyph className="h-[18px] w-[18px] text-black" /></YellowDisc>
            <span className="text-[18px] tracking-[0.6px]">091-234-5678</span>
          </div>
        </div>
        <div className="flex h-10 items-center justify-center whitespace-pre pt-[2px] text-[12.500px] tracking-[-0.08px] text-[#d2d2d2]">©  2021 AUTOPOINT. ALL RIGHTS RESERVED.PRIVACY POLICY</div>
      </footer>
    </div>
  );
}
